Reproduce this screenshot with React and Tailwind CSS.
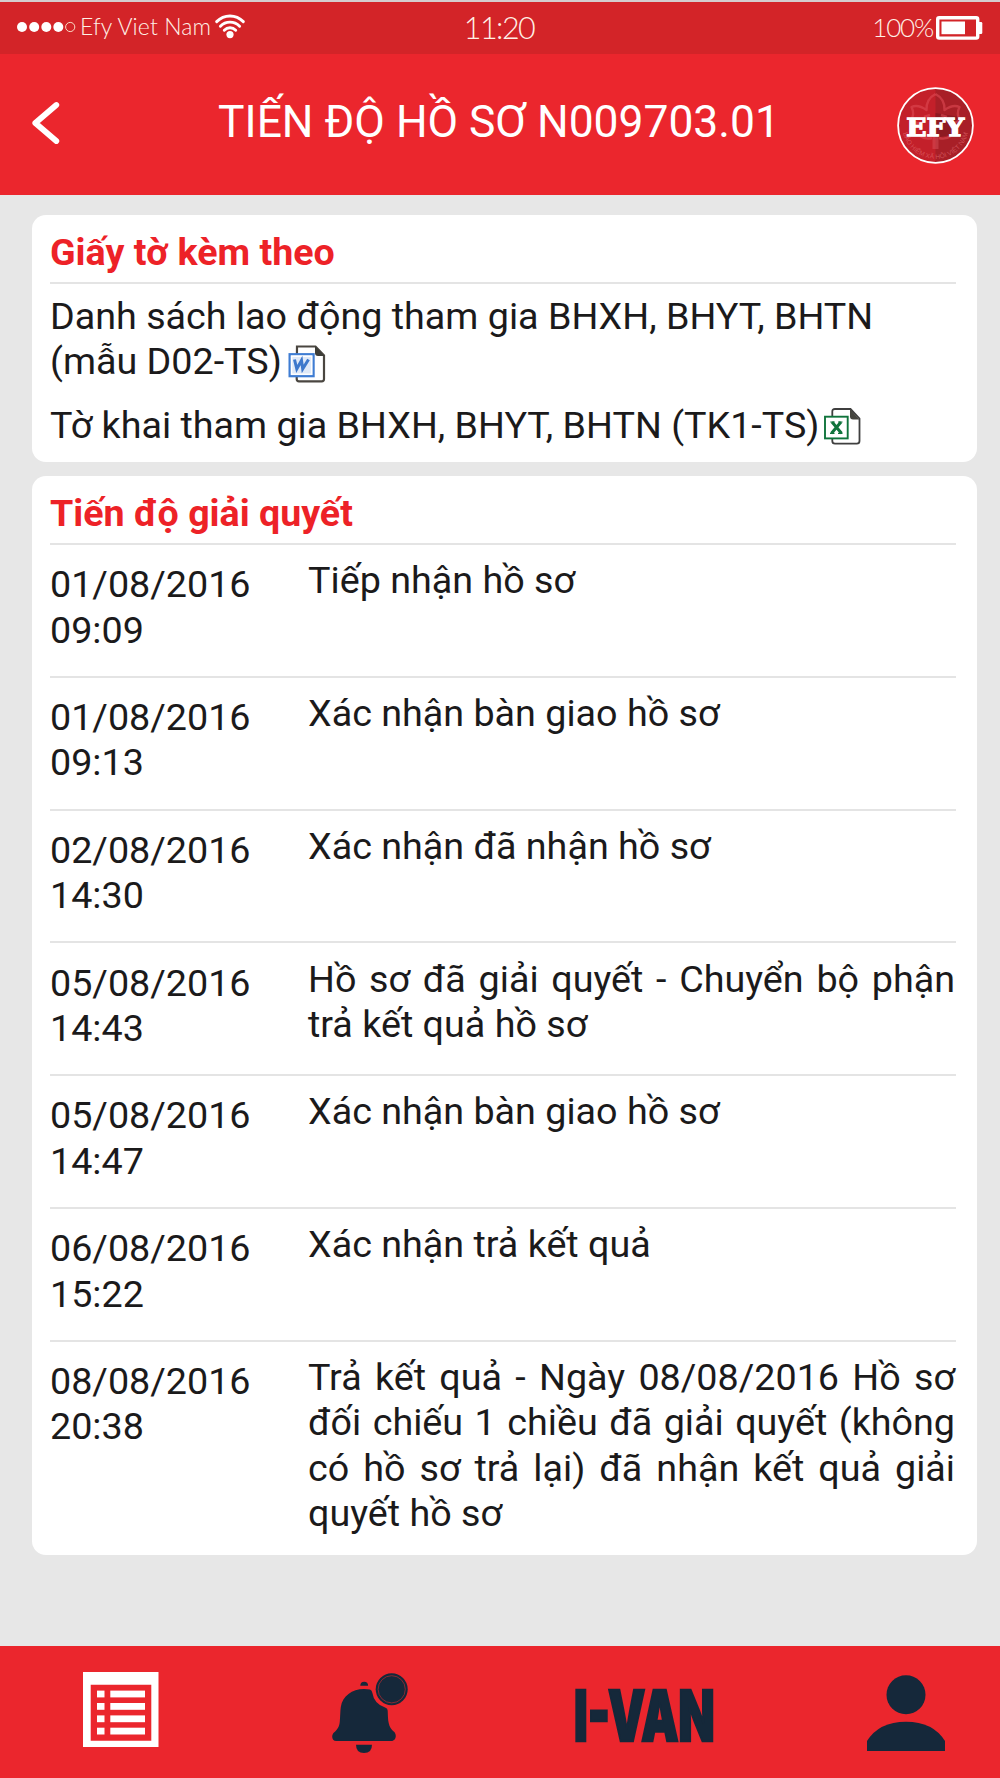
import React from 'react';

const steps = [
  { date: '01/08/2016', time: '09:09', text: 'Tiếp nhận hồ sơ' },
  { date: '01/08/2016', time: '09:13', text: 'Xác nhận bàn giao hồ sơ' },
  { date: '02/08/2016', time: '14:30', text: 'Xác nhận đã nhận hồ sơ' },
  { date: '05/08/2016', time: '14:43', text: 'Hồ sơ đã giải quyết - Chuyển bộ phận trả kết quả hồ sơ' },
  { date: '05/08/2016', time: '14:47', text: 'Xác nhận bàn giao hồ sơ' },
  { date: '06/08/2016', time: '15:22', text: 'Xác nhận trả kết quả' },
  {
    date: '08/08/2016',
    time: '20:38',
    text: 'Trả kết quả - Ngày 08/08/2016 Hồ sơ đối chiếu 1 chiều đã giải quyết (không có hồ sơ trả lại) đã nhận kết quả giải quyết hồ sơ',
  },
];

const WifiIcon = () => (
  <svg width="30" height="25" viewBox="0 0 30 25" fill="none" stroke="white" strokeWidth="2.9" strokeLinecap="round">
    <path d="M1.7 7.6C9.2.1 20.8.1 28.3 7.6" />
    <path d="M5.4 12.2C10.8 6.8 19.2 6.8 24.6 12.2" />
    <path d="M9.3 16.2C12.5 13 17.5 13 20.7 16.2" />
    <circle cx="15" cy="20.6" r="3.6" fill="white" stroke="none" />
  </svg>
);

const BatteryIcon = () => (
  <svg width="47" height="24" viewBox="0 0 47 24">
    <rect x="1.7" y="1.7" width="40" height="20.4" rx="1.5" fill="none" stroke="white" strokeWidth="3.4" />
    <rect x="5.5" y="5.5" width="23.5" height="12.7" fill="white" />
    <path d="M43 6h2q1.3 0 1.3 1.3v9.4q0 1.3-1.3 1.3h-2z" fill="white" />
  </svg>
);

const SignalDots = () => (
  <svg width="60" height="12" viewBox="0 0 60 12" fill="white">
    <circle cx="5" cy="6" r="5" />
    <circle cx="17.2" cy="6" r="5" />
    <circle cx="29.3" cy="6" r="5" />
    <circle cx="41.3" cy="6" r="5" />
    <circle cx="53.2" cy="6" r="4.6" fill="none" stroke="#fbd9c4" strokeWidth="1" />
  </svg>
);

const Logo = () => (
  <svg width="77" height="77" viewBox="0 0 77 77">
    <defs>
      <path id="rim" d="M5.5 43a33.3 33.3 0 0 0 66 0" />
    </defs>
    <circle cx="38.5" cy="38.5" r="37" fill="#c3202a" />
    <path d="M38.5 1.5a37 37 0 0 1 0 74z" fill="#a81f27" />
    <path d="M38.5 26l24 4-5 17-19 4z" fill="#8e1a22" />
    <g fill="none" stroke="#dd4a54" strokeOpacity=".6" strokeWidth="2.4" strokeLinejoin="round">
      <path d="M38.5 7Q29 12 29.5 23Q21 17 14.5 20Q18 27 14 33Q20 37 25 37" />
      <path d="M38.5 7Q48 12 47.5 23Q56 17 62.5 20Q59 27 63 33Q57 37 52 37" />
      <path d="M23 49q6 4 12 2M54 49q-6 4-12 2M27 30l6-2M50 30l-6-2" />
    </g>
    <path d="M35.5 49h6v13h-6z" fill="#d8505a" fillOpacity=".5" />
    <text fontSize="6.600" fill="#e26a70" fillOpacity=".65" className="font-['Liberation_Sans',sans-serif]">
      <textPath href="#rim" startOffset="3">BẢO HIỂM XÃ HỘI VIỆT NAM</textPath>
    </text>
    <circle cx="38.5" cy="38.5" r="37.4" fill="none" stroke="white" strokeWidth="1.8" />
    <text
      x="9.3"
      y="48.5"
      fontSize="24.5"
      fill="white"
      stroke="white"
      strokeWidth="1.3"
      textLength="58"
      lengthAdjust="spacingAndGlyphs"
      className="font-['DejaVu_Serif',serif] font-bold"
    >
      EFY
    </text>
  </svg>
);

const WordIcon = () => (
  <svg width="38" height="38" viewBox="0 0 38 38" className="shrink-0">
    <path d="M9 1.5h18.5l8.5 9V34q0 2.3-2.3 2.3H11q-2.3 0-2.3-2.3z" fill="white" stroke="#4a4640" strokeWidth="2.2" />
    <path d="M27 1l9.5 10H30q-3 0-3-3z" fill="#3d3d38" />
    <rect x="1.6" y="9.2" width="24" height="22" fill="#dfe9f8" stroke="#3f7dd3" strokeWidth="2.2" />
    <rect x="3.6" y="11.2" width="20" height="18" fill="none" stroke="white" strokeWidth="1.4" />
    <path d="M6.5 14.5l2.3 9.5 4.7-8.5 1.2 8.5 5.8-9.5" fill="none" stroke="#3d78cc" strokeWidth="3" />
  </svg>
);

const ExcelIcon = () => (
  <svg width="37" height="37" viewBox="0 0 37 37" className="shrink-0">
    <path d="M11 1h15.5l9 9.5V33q0 2.7-2.7 2.7H11Q8.3 35.7 8.3 33V3.7Q8.3 1 11 1z" fill="white" stroke="#3f3f3f" strokeWidth="1.8" />
    <path d="M26 1l9.5 10.5H29q-3 0-3-3z" fill="#45453f" />
    <rect x="1" y="8.7" width="22.7" height="21.7" fill="white" stroke="#10743c" strokeWidth="1.9" />
    <path d="M8 14l9.5 11.3M17 14L7.5 25.3" stroke="#10743c" strokeWidth="3" />
    <path d="M6.3 14h4.5M14 14h4.5M6 25.3h4.5M14 25.3h4.5" stroke="#10743c" strokeWidth="1.2" />
  </svg>
);

const ListIcon = () => (
  <svg width="76" height="75" viewBox="0 0 76 75">
    <path d="M0 0h75.5v75H0zM7.7 12.7v56h60.6v-56z" fill="white" fillRule="evenodd" />
    <g fill="white">
      {[18.6, 31, 43.4, 55.7].map((y) => (
        <g key={y}>
          <rect x="14" y={y} width="7.5" height="6.8" />
          <rect x="27.3" y={y} width="34.7" height="6.8" />
        </g>
      ))}
    </g>
  </svg>
);

const BellIcon = () => (
  <svg width="76" height="81" viewBox="0 0 76 81" fill="#15283a">
    <path d="M28.3 12.7q0-4 3.9-4t3.9 4z" />
    <path d="M32 16q3.5 0 6 .6 2 .7 2.4 3.4 1.6 11 13.2 14.8 2 .5 2.1 3c.2 5 .2 9 1 12.2.8 4 2.500 6.500 5.300 8.700 3 2.600 2.200 9.300-2.700 9.300h-55C-.4 68-.9 62 2 59.500c3.500-3 5.400-5.700 5.800-11 .5-6 .4-10 1-14.500C10.500 23 20 16 32 16z" />
    <path d="M24 71.7h16q0 8.3-8 8.3t-8-8.3z" />
    <circle cx="59.7" cy="16.3" r="16" />
    <circle cx="59.7" cy="16.3" r="13.6" fill="none" stroke="#8e2a33" strokeWidth=".9" />
  </svg>
);

const VanLogo = () => (
  <svg width="138" height="90" viewBox="0 -24 138 90" className="overflow-visible">
    <text
      x="-2"
      y="52"
      fontSize="70"
      fill="#15283a"
      stroke="#15283a"
      strokeWidth="2.6"
      textLength="140.5"
      lengthAdjust="spacingAndGlyphs"
      className="font-['Inter',sans-serif] font-black"
    >
      I-VAN
    </text>
  </svg>
);

const UserIcon = () => (
  <svg width="78" height="77" viewBox="0 0 78 77" fill="#15283a">
    <circle cx="39" cy="19.7" r="19.5" />
    <path d="M0 66Q12 46.7 39 46.7T78 66v10H0z" />
  </svg>
);

const SectionTitle = ({ children }) => (
  <h2 className="h-[69px] border-b-2 border-[#e4e4e4] pt-[15px] text-[37.6px] leading-[45.5px] font-bold text-[#ed2227]">
    {children}
  </h2>
);

const App = () => {
  return (
    <div className="flex h-[1778px] w-[1000px] flex-col border-t-2 border-[#d5cccd] bg-[#e7e7e7] font-['Roboto',sans-serif] text-[#1b1a1b]">
      <div className="flex h-[52px] shrink-0 items-start bg-[#d32428] font-['Lato',sans-serif] font-light text-[#fff0e6]">
        <div className="flex flex-1 items-start pl-[17px]">
          <div className="mt-[19px]"><SignalDots /></div>
          <span className="mt-[8px] ml-[3px] w-[133px] text-[23px] leading-[32px] tracking-[0.1px] whitespace-nowrap">Efy Viet Nam</span>
          <div className="mt-[12px] ml-[2px]"><WifiIcon /></div>
        </div>
        <span className="mt-[5px] mr-[2px] text-[30.5px] leading-[40px] tracking-[-1.5px]">11:20</span>
        <div className="flex flex-1 items-start justify-end pr-[17px]">
          <span className="mt-[7px] mr-[3px] text-[26px] leading-[36px] tracking-[-1.2px]">100%</span>
          <div className="mt-[14px]"><BatteryIcon /></div>
        </div>
      </div>

      <header className="flex h-[141px] shrink-0 items-center bg-[#eb262d] pr-[26px] pl-[31px] text-white">
        <svg width="30" height="44" viewBox="0 0 30 44" fill="none" stroke="white" strokeWidth="5.8" strokeLinecap="round" strokeLinejoin="round" className="mb-[3px]">
          <path d="M25.3 4L4.3 22 25.3 40" />
        </svg>
        <h1 className="flex-1 pb-[6px] pl-[40px] text-center text-[44.4px] leading-[54px] whitespace-nowrap">TIẾN ĐỘ HỒ SƠ N009703.01</h1>
        <div className="mt-[2px]"><Logo /></div>
      </header>

      <main className="flex flex-1 flex-col gap-[14px] pt-5 pr-[23px] pl-8">
        <section className="h-[247px] rounded-[14px] bg-white pr-[21px] pl-[18px]">
          <SectionTitle>Giấy tờ kèm theo</SectionTitle>
          <div className="pt-[9.5px] text-[37.7px] leading-[45.5px]">
            <p>Danh sách lao động tham gia BHXH, BHYT, BHTN</p>
            <p className="flex items-center">
              <span>(mẫu D02-TS)</span>
              <span className="mt-[5px] ml-[6px]"><WordIcon /></span>
            </p>
            <p className="mt-[18px] flex items-center whitespace-nowrap">
              <span>Tờ khai tham gia BHXH, BHYT, BHTN (TK1-TS)</span>
              <span className="mt-[2px] ml-[5px]"><ExcelIcon /></span>
            </p>
          </div>
        </section>

        <section className="h-[1079px] rounded-[14px] bg-white pr-[21px] pl-[18px]">
          <SectionTitle>Tiến độ giải quyết</SectionTitle>
          {steps.map((step, i) => (
            <div
              key={i}
              className="flex h-[132.8px] border-b-2 border-[#e4e4e4] text-[37.7px] leading-[45.5px] last:h-auto last:border-b-0"
            >
              <div className="w-[258px] shrink-0 pt-[17.2px]">
                <p>{step.date}</p>
                <p>{step.time}</p>
              </div>
              <p className="flex-1 pt-[13.2px] pr-px text-justify">{step.text}</p>
            </div>
          ))}
        </section>
      </main>

      <nav className="flex h-[132px] shrink-0 items-start bg-[#eb262d] pl-[83px]">
        <div className="mt-[26px]"><ListIcon /></div>
        <div className="mt-[27px] ml-[173px]"><BellIcon /></div>
        <div className="mt-[19px] ml-[168px]"><VanLogo /></div>
        <div className="mt-[29px] ml-[153px]"><UserIcon /></div>
      </nav>
    </div>
  );
};

export default App;
